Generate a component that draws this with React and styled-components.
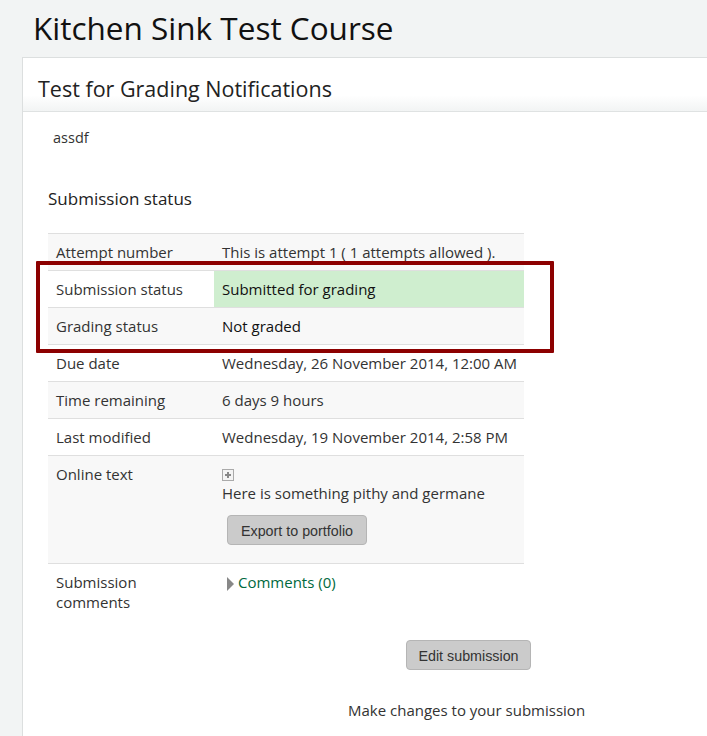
import React from 'react';
import styled, { createGlobalStyle } from 'styled-components';

const GlobalStyle = createGlobalStyle`
  html, body {
    margin: 0;
    padding: 0;
    height: 736px;
    overflow: hidden;
    background: #f2f4f4;
    font-family: "Open Sans", "Liberation Sans", sans-serif;
    color: #333;
  }
`;

const Page = styled.div`
  width: 707px;
  height: 736px;
  overflow: hidden;
`;

const CourseTitle = styled.h1`
  margin: 0;
  height: 57px;
  padding-left: 33px;
  font-size: 31.5px;
  font-weight: 400;
  line-height: 55px;
  color: #111;
  box-sizing: border-box;
`;

const Card = styled.div`
  margin-left: 22px;
  height: 679px;
  background: #fff;
  border-top: 1px solid #dcdfdf;
  border-left: 1px solid #dcdfdf;
  box-sizing: border-box;
`;

const CardHeader = styled.div`
  height: 54px;
  padding-left: 15px;
  box-sizing: border-box;
  background: linear-gradient(to bottom, #fff 0%, #fff 70%, #f2f4f4 100%);
  border-bottom: 1px solid #dfe2e2;
`;

const ActivityTitle = styled.h2`
  margin: 0;
  font-size: 21.5px;
  font-weight: 400;
  line-height: 62px;
  color: #222;
`;

const Intro = styled.p`
  margin: 0;
  padding: 16px 0 0 30px;
  font-size: 14.5px;
  line-height: 20px;
  color: #333;
`;

const SectionTitle = styled.h3`
  margin: 0;
  padding: 39px 0 0 25px;
  font-size: 17px;
  font-weight: 400;
  line-height: 24px;
  color: #222;
`;

const Wrap = styled.div`
  position: relative;
  margin: 22px 0 0 25px;
  width: 476px;
`;

const StatusTable = styled.div`
  display: grid;
  grid-template-columns: 166px 310px;
  border-top: 1px solid #dfdfdf;
`;

const Row = styled.div`
  display: grid;
  grid-column: 1 / -1;
  grid-template-columns: subgrid;
  min-height: ${(p) => p.$height || 36}px;
  border-bottom: ${(p) => (p.$last ? 'none' : '1px solid #dfdfdf')};
  background: ${(p) => (p.$odd ? '#f8f8f8' : '#fff')};
`;

const Label = styled.div`
  padding: 8px 8px 0;
  font-size: 15px;
  line-height: 20px;
  color: #333;
`;

const Value = styled.div`
  padding: 8px 8px 0;
  font-size: 15px;
  line-height: 20px;
  white-space: nowrap;
  color: ${(p) => (p.$strong ? '#111' : '#333')};
  background: ${(p) => p.$bg || 'transparent'};
`;

const Highlight = styled.div`
  position: absolute;
  left: -12px;
  top: 28px;
  width: 518px;
  height: 92px;
  box-sizing: border-box;
  border: 4px solid #8c0000;
  border-radius: 1px;
  pointer-events: none;
`;

const PlusIcon = styled.svg`
  display: block;
  margin: 5px 0 2px;
`;

const Button = styled.button`
  display: block;
  padding: 1px 0 0;
  height: 30px;
  font-family: "Liberation Sans", Arial, sans-serif;
  font-size: 14.3px;
  color: #333;
  background: #cbcbcb;
  border: 1px solid #b5b5b5;
  border-radius: 4px;
  width: ${(p) => p.$width}px;
`;

const ExportButton = styled(Button)`
  margin: 12px 0 0 5px;
`;

const CommentsLine = styled.div`
  display: flex;
  align-items: center;
  gap: 4px;
  padding-left: 5px;
`;

const Triangle = styled.span`
  width: 0;
  height: 0;
  margin-top: 4px;
  border-left: 7px solid #888;
  border-top: 7px solid transparent;
  border-bottom: 7px solid transparent;
`;

const CommentsLink = styled.a`
  color: #00693e;
  font-size: 15px;
`;

const SubmissionAction = styled.div`
  margin: 20px 0 0 25px;
`;

const EditButton = styled(Button)`
  margin-left: 358px;
`;

const Hint = styled.p`
  margin: 0;
  padding: 30px 0 0 300px;
  font-size: 15px;
  line-height: 20px;
  white-space: nowrap;
  color: #333;
`;

const rows = [
  { label: 'Attempt number', value: 'This is attempt 1 ( 1 attempts allowed ).', odd: true },
  { label: 'Submission status', value: 'Submitted for grading', bg: '#cfeecf', strong: true },
  { label: 'Grading status', value: 'Not graded', odd: true, strong: true },
  { label: 'Due date', value: 'Wednesday, 26 November 2014, 12:00 AM' },
  { label: 'Time remaining', value: '6 days 9 hours', odd: true },
  { label: 'Last modified', value: 'Wednesday, 19 November 2014, 2:58 PM' },
];

const App = () => {
  return (
    <Page>
      <GlobalStyle />
      <CourseTitle>Kitchen Sink Test Course</CourseTitle>
      <Card>
        <CardHeader>
          <ActivityTitle>Test for Grading Notifications</ActivityTitle>
        </CardHeader>
        <Intro>assdf</Intro>
        <SectionTitle>Submission status</SectionTitle>
        <Wrap>
          <StatusTable>
            {rows.map((r) => (
              <Row key={r.label} $odd={r.odd}>
                <Label>{r.label}</Label>
                <Value $bg={r.bg} $strong={r.strong}>{r.value}</Value>
              </Row>
            ))}
            <Row $odd $height={107}>
              <Label>Online text</Label>
              <Value>
                <PlusIcon width="12" height="12" viewBox="0 0 12 12">
                  <rect x="0.5" y="0.5" width="11" height="11" fill="#f4f4f4" stroke="#aaa" />
                  <path d="M6 3v6M3 6h6" stroke="#888" strokeWidth="2" />
                </PlusIcon>
                Here is something pithy and germane
                <ExportButton $width={140}>Export to portfolio</ExportButton>
              </Value>
            </Row>
            <Row $last $height={56}>
              <Label>Submission comments</Label>
              <Value>
                <CommentsLine>
                  <Triangle />
                  <CommentsLink>Comments (0)</CommentsLink>
                </CommentsLine>
              </Value>
            </Row>
          </StatusTable>
          <Highlight />
        </Wrap>
        <SubmissionAction>
          <EditButton $width={125}>Edit submission</EditButton>
          <Hint>Make changes to your submission</Hint>
        </SubmissionAction>
      </Card>
    </Page>
  );
};

export default App;
